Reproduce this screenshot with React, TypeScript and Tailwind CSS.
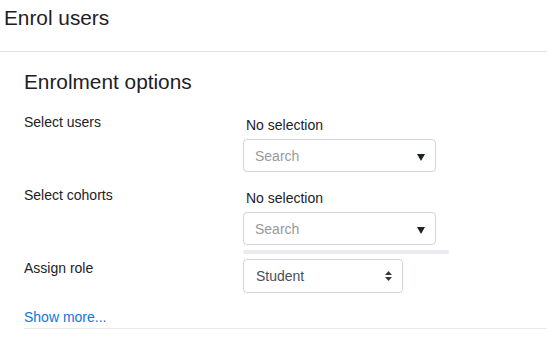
import React from "react";

function SearchBox() {
  return (
    <div className="mt-[3px] w-[193px] h-[33px] border border-[#ced4da] rounded-[4px] flex items-center justify-between pl-[11px] pr-[10px] bg-white">
      <span className="text-[14px] text-[#999999] leading-none">Search</span>
      <svg width="8" height="7" viewBox="0 0 8 7" className="mt-[4px]">
        <polygon points="0,0 8,0 4,7" fill="#1d2125" />
      </svg>
    </div>
  );
}

export default function App() {
  return (
    <div className="w-[547px] h-[345px] bg-white overflow-hidden text-[#1d2125] font-['Liberation_Sans',Arial,sans-serif]">
      <div className="h-[52px] border-b border-[#dee2e6] pl-[4px] pt-[5px]">
        <h1 className="text-[20.8px] leading-[25px]">Enrol users</h1>
      </div>
      <div className="pl-[24px]">
        <h2 className="mt-[17px] text-[20.8px] leading-[25px]">Enrolment options</h2>

        <div className="mt-[18px] flex text-[14px] leading-[21px]">
          <div className="w-[219px]">Select users</div>
          <div className="pt-[3px]">
            <div className="pl-[3px]">No selection</div>
            <SearchBox />
          </div>
        </div>

        <div className="mt-[13px] flex text-[14px] leading-[21px]">
          <div className="w-[219px]">Select cohorts</div>
          <div className="pt-[3px]">
            <div className="pl-[3px]">No selection</div>
            <SearchBox />
            <div className="mt-[5px] w-[206px] h-[4px] rounded-full bg-[#e9ecef]" />
          </div>
        </div>

        <div className="mt-[4px] flex text-[14px] leading-[21px]">
          <div className="w-[219px]">Assign role</div>
          <div className="pt-[1px]">
            <div className="w-[160px] h-[34px] border border-[#ced4da] rounded-[4px] flex items-center justify-between pl-[12px] pr-[10px]">
              <span className="text-[#495057]">Student</span>
              <svg width="7" height="10" viewBox="0 0 7 10">
                <polygon points="3.5,0 7,4 0,4" fill="#343a40" />
                <polygon points="0,6 7,6 3.5,10" fill="#343a40" />
              </svg>
            </div>
          </div>
        </div>

        <div className="mt-[14px] text-[14px] leading-[21px] border-b border-[#e9ecef]">
          <a className="text-[#1177d1]" href="#">Show more...</a>
        </div>
      </div>
    </div>
  );
}
